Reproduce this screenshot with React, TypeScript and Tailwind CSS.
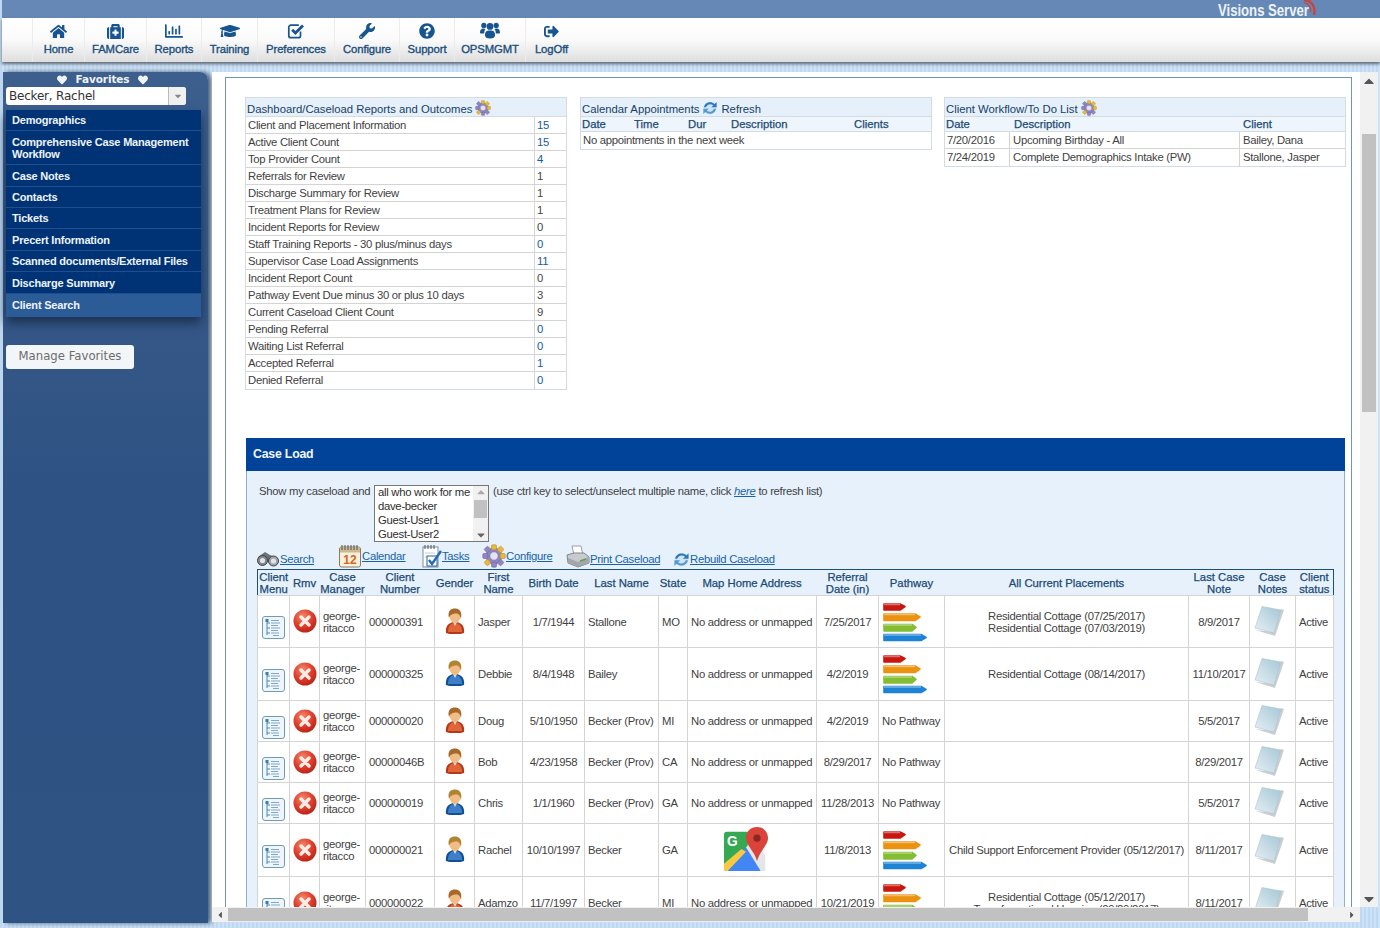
import React from "react";
import { FaHome, FaMedkit, FaRegChartBar, FaGraduationCap, FaWrench, FaQuestionCircle, FaSignOutAlt, FaHeart, FaCaretDown, FaCaretUp, FaCaretRight, FaCaretLeft } from "react-icons/fa";

const CheckSquare = ({ size = 17 }: { size?: number }) => (
  <svg width={size} height={size} viewBox="0 0 18 18" className="block">
    <path d="M13.5 9.5v4.2a2 2 0 0 1-2 2H3.8a2 2 0 0 1-2-2V5.2a2 2 0 0 1 2-2h8" fill="none" stroke="currentColor" strokeWidth="1.7" />
    <path d="M5.2 7.8 L8.4 11 L16 3.4" fill="none" stroke="currentColor" strokeWidth="2.8" />
  </svg>
);

const PeopleIco = ({ size = 20 }: { size?: number }) => (
  <svg width={size} height={size} viewBox="0 0 20 18" fill="currentColor" className="block">
    <circle cx="3.8" cy="3.4" r="2.6" />
    <circle cx="16.2" cy="3.4" r="2.6" />
    <circle cx="10" cy="4.4" r="3.4" />
    <path d="M0 11 C0 7.5 1.5 6.4 3.8 6.4 C4.6 6.4 5 6.6 5.4 6.9 C4.6 8.2 4.2 9.6 4.2 11.6 L0.8 11.6 Z" />
    <path d="M20 11 C20 7.5 18.5 6.4 16.2 6.4 C15.4 6.4 15 6.6 14.6 6.9 C15.4 8.2 15.8 9.6 15.8 11.6 L19.2 11.6 Z" />
    <path d="M5 13.2 C5 9.8 6.4 8.4 10 8.4 C13.6 8.4 15 9.8 15 13.2 C15 15.2 13.4 16.5 10 16.5 C6.6 16.5 5 15.2 5 13.2 Z" />
  </svg>
);

const Gear = ({ s = 16 }: { s?: number }) => (
  <svg width={s} height={s} viewBox="0 0 24 24" className="inline-block shrink-0">
    <g fill="#8f86c4" stroke="#6d67a3" strokeWidth="0.6">
      <circle cx="12" cy="12" r="8" />
      <rect x="9.5" y="0.8" width="5" height="5" rx="1.2" fill="#e8b93a" stroke="#b98c20" />
      <rect x="9.5" y="18.2" width="5" height="5" rx="1.2" />
      <rect x="0.8" y="9.5" width="5" height="5" rx="1.2" />
      <rect x="18.2" y="9.5" width="5" height="5" rx="1.2" fill="#e8b93a" stroke="#b98c20" />
      <rect x="3" y="3" width="5" height="5" rx="1.2" transform="rotate(45 5.5 5.5)" />
      <rect x="16" y="3" width="5" height="5" rx="1.2" transform="rotate(45 18.5 5.5)" fill="#e8b93a" stroke="#b98c20" />
      <rect x="3" y="16" width="5" height="5" rx="1.2" transform="rotate(45 5.5 18.5)" fill="#e8b93a" stroke="#b98c20" />
      <rect x="16" y="16" width="5" height="5" rx="1.2" transform="rotate(45 18.5 18.5)" />
    </g>
    <circle cx="12" cy="12" r="4.2" fill="#e4e2f3" stroke="#77719f" strokeWidth="0.7" />
  </svg>
);

const RefreshIco = ({ s = 16 }: { s?: number }) => (
  <svg width={s} height={s} viewBox="0 0 24 24" className="inline-block shrink-0">
    <ellipse cx="12" cy="12" rx="10" ry="9.5" fill="#cfe3f3" />
    <path d="M3 11 C4 4 13 1 19 6 L22 3 L22 11 L14 11 L17 8 C13 5 8 6 6 11 Z" fill="#2e78b7" />
    <path d="M21 13 C20 20 11 23 5 18 L2 21 L2 13 L10 13 L7 16 C11 19 16 18 18 13 Z" fill="#4f9ad0" />
  </svg>
);

const Binoculars = () => (
  <svg width="24" height="18" viewBox="0 0 24 18" className="shrink-0">
    <path d="M2 7 L9 2 L14 5 L22 8 L20 14 L12 11 L8 15 L3 13 Z" fill="#6d7278" />
    <circle cx="6.5" cy="10.5" r="5" fill="#83888e" stroke="#3f4347" />
    <circle cx="17.5" cy="11" r="5" fill="#9fa4a9" stroke="#3f4347" />
    <circle cx="6.5" cy="10.5" r="2.6" fill="#dfe4e8" />
    <circle cx="17.5" cy="11" r="2.6" fill="#dfe4e8" />
  </svg>
);

const CalendarIco = () => (
  <svg width="24" height="24" viewBox="0 0 24 24" className="shrink-0">
    <rect x="1.5" y="3" width="21" height="20" rx="2" fill="#f6f0df" stroke="#8d7b58" />
    <rect x="2" y="3.5" width="20" height="5" fill="#cdb98f" />
    <path d="M4 1v5M7 1v5M10 1v5M13 1v5M16 1v5M19 1v5" stroke="#555" strokeWidth="1" />
    <text x="12" y="20" textAnchor="middle" fontSize="12" fontWeight="700" fontFamily="Liberation Sans" fill="#d8651c">12</text>
  </svg>
);

const TasksIco = () => (
  <svg width="20" height="24" viewBox="0 0 20 24" className="shrink-0">
    <rect x="1" y="3" width="15" height="20" fill="#fff" stroke="#7f8ea0" />
    <path d="M3 1v4M6 1v4M9 1v4M12 1v4" stroke="#555" />
    <path d="M3 9h10M3 13h6" stroke="#c8d0da" />
    <rect x="5" y="12" width="10" height="10" fill="#fff" stroke="#2a5f9e" />
    <path d="M7 16 L10 20 L19 7" fill="none" stroke="#1e6bb8" strokeWidth="2.4" />
  </svg>
);

const PrinterIco = () => (
  <svg width="24" height="24" viewBox="0 0 24 24" className="shrink-0">
    <path d="M6 2 L15 2 L17 11 L8 11 Z" fill="#fff" stroke="#9aa0a6" />
    <path d="M1 11 L8 9 L18 9 L23 13 L23 19 L12 23 L2 19 Z" fill="#c7cbcf" stroke="#80858a" />
    <path d="M2 14 L12 18 L23 13 L23 19 L12 23 L2 19 Z" fill="#a2a7ac" />
    <path d="M14 17 L20 15" stroke="#5aa04f" strokeWidth="1.5" />
  </svg>
);

const ClientMenuIco = () => (
  <svg width="23" height="23" viewBox="0 0 23 23" className="block mx-auto mt-[12px]">
    <rect x="0.5" y="0.5" width="22" height="22" rx="2.5" fill="#eef6fb" stroke="#6f9ab8" />
    <path d="M5 4v15M5 7h3M5 12h3M5 17h3" stroke="#4d87b3" fill="none" />
    <rect x="3.5" y="3" width="3" height="3" fill="#3e7dab" />
    <path d="M9 4.5h8M9 7h9M9 9.5h7M9 12h9M9 14.5h7M9 17h8M11 19.5h6" stroke="#7fa9c6" strokeWidth="1" />
  </svg>
);

const RemoveIco = () => (
  <svg width="24" height="24" viewBox="0 0 24 24" className="block mx-auto mb-[1px]">
    <defs>
      <radialGradient id="rmg" cx="40%" cy="30%" r="75%">
        <stop offset="0%" stopColor="#f08a6e" />
        <stop offset="55%" stopColor="#df3f2c" />
        <stop offset="100%" stopColor="#b81f14" />
      </radialGradient>
    </defs>
    <circle cx="12" cy="12" r="11.5" fill="url(#rmg)" />
    <path d="M8 8 L16 16 M16 8 L8 16" stroke="#fbeee8" strokeWidth="3.4" strokeLinecap="round" />
  </svg>
);

const Person = ({ f }: { f: boolean }) => {
  const c1 = f ? "#3d7fc9" : "#e0663a";
  const c2 = f ? "#12508f" : "#b23a1a";
  return (
    <svg width="22" height="26" viewBox="0 0 22 26" className="block mx-auto mb-[2px]">
      <path d="M2 25 C1 17 6 14 11 14 C16 14 21 17 20 25 C15 27 7 27 2 25 Z" fill={c2} />
      <path d="M4 24 C4 18 7 15 11 15 C15 15 18 18 18 24 Z" fill={c1} />
      <path d="M9 14 L11 18 L13 14 Z" fill="#f3dcc0" />
      <ellipse cx="11" cy="8" rx="5.4" ry="7" fill="#f0bd86" />
      <path d="M5 10 C3 2 8 0 12 0.5 C17 1 18 6 17 11 C16 6 14 5 11 5.5 C8 6 6 7 5 10 Z" fill={f ? "#b08432" : "#a8682a"} />
    </svg>
  );
};

const Pathway = () => (
  <svg width="44" height="40" viewBox="0 0 44 40" className="block ml-[1px]">
    <g strokeLinejoin="round" strokeWidth="1.6">
      <path d="M1 2 L17 2 L22 4.5 L17 8 L1 8 Z" fill="#c8170f" stroke="#c8170f" />
      <path d="M1 12 L32 12 L37 15 L32 18.5 L1 18.5 Z" fill="#ec9211" stroke="#ec9211" />
      <path d="M1 22.5 L29 22.5 L33 25.5 L29 29 L1 29 Z" fill="#84bd33" stroke="#84bd33" />
      <path d="M1 32.5 L38 32.5 L43 35.5 L38 38.5 L1 38.5 Z" fill="#1e83d4" stroke="#1e83d4" />
    </g>
    <path d="M1 2.5h16M1 12.5h31M1 23h28M1 33h37" stroke="#ffffff" strokeOpacity="0.4" strokeWidth="1.5" />
  </svg>
);

const Notebook = () => (
  <svg width="30" height="30" viewBox="0 0 30 30" className="block ml-[1px] mb-[2px]">
    <defs>
      <linearGradient id="nbg" x1="0" y1="1" x2="1" y2="0">
        <stop offset="0%" stopColor="#e6f0f4" />
        <stop offset="100%" stopColor="#a4c6d6" />
      </linearGradient>
    </defs>
    <path d="M1 24 L21 30 L30 4 L27 3 L20 26 Z" fill="#c8ced1" />
    <path d="M1 22 L8 0.5 L27 4 L20 27 Z" fill="url(#nbg)" stroke="#a9bcc6" strokeWidth="0.5" />
  </svg>
);

const MapsLogo = () => (
  <svg width="44" height="48" viewBox="0 0 48 50" className="block ml-[33px]">
    <path d="M0 8 Q0 5 3 5 L26 5 L26 22 L0 46 Z" fill="#34a853" />
    <path d="M0 46 L24 22 L45 47 Q45 48 42 48 L3 48 Q0 48 0 46 Z" fill="#4285f4" />
    <path d="M0 40 L19 24 L24 27 L4 48 L3 48 Q0 48 0 46 Z" fill="#f8c93e" />
    <path d="M24 22 L32 14 L45 30 L45 48 L40 48 Z" fill="#e4e6e8" />
    <text x="9" y="21" fontSize="15" fontWeight="700" fontFamily="Liberation Sans" fill="#fff" textAnchor="middle">G</text>
    <path d="M36 0 C29 0 24 5 24 12 C24 20 33 26 36 37 C39 26 48 20 48 12 C48 5 43 0 36 0 Z" fill="#d9433a" />
    <circle cx="36" cy="12" r="4" fill="#8a2720" />
  </svg>
);

const nav = [
  { l: "Home", w: "w-[52px]", I: FaHome, s: 17 },
  { l: "FAMCare", w: "w-[62px]", I: FaMedkit, s: 17 },
  { l: "Reports", w: "w-[55px]", I: FaRegChartBar, s: 18 },
  { l: "Training", w: "w-[56px]", I: FaGraduationCap, s: 20 },
  { l: "Preferences", w: "w-[77px]", I: CheckSquare, s: 18 },
  { l: "Configure", w: "w-[65px]", I: FaWrench, s: 16 },
  { l: "Support", w: "w-[55px]", I: FaQuestionCircle, s: 16 },
  { l: "OPSMGMT", w: "w-[71px]", I: PeopleIco, s: 20 },
  { l: "LogOff", w: "w-[52px]", I: FaSignOutAlt, s: 15 },
];

const menu = [
  { l: "Demographics", c: "h-[21px]" },
  { l: "Comprehensive Case Management Workflow", c: "h-[34px]" },
  { l: "Case Notes", c: "h-[22px]" },
  { l: "Contacts", c: "h-[21px]" },
  { l: "Tickets", c: "h-[21px]" },
  { l: "Precert Information", c: "h-[22px]" },
  { l: "Scanned documents/External Files", c: "h-[21px]" },
  { l: "Discharge Summary", c: "h-[22px]" },
];

const dash: [string, string, boolean][] = [
  ["Client and Placement Information", "15", true],
  ["Active Client Count", "15", true],
  ["Top Provider Count", "4", true],
  ["Referrals for Review", "1", false],
  ["Discharge Summary for Review", "1", false],
  ["Treatment Plans for Review", "1", false],
  ["Incident Reports for Review", "0", false],
  ["Staff Training Reports - 30 plus/minus days", "0", true],
  ["Supervisor Case Load Assignments", "11", true],
  ["Incident Report Count", "0", false],
  ["Pathway Event Due minus 30 or plus 10 days", "3", false],
  ["Current Caseload Client Count", "9", false],
  ["Pending Referral", "0", true],
  ["Waiting List Referral", "0", true],
  ["Accepted Referral", "1", true],
  ["Denied Referral", "0", true],
];

type Row = {
  h: string; num: string; f: boolean; first: string; birth: string; last: string; st: string;
  map?: boolean; ref: string; path: boolean; place: string[]; note: string;
};
const rows: Row[] = [
  { h: "h-[52px]", num: "000000391", f: false, first: "Jasper", birth: "1/7/1944", last: "Stallone", st: "MO", ref: "7/25/2017", path: true, place: ["Residential Cottage (07/25/2017)", "Residential Cottage (07/03/2019)"], note: "8/9/2017" },
  { h: "h-[53px]", num: "000000325", f: true, first: "Debbie", birth: "8/4/1948", last: "Bailey", st: "", ref: "4/2/2019", path: true, place: ["Residential Cottage (08/14/2017)"], note: "11/10/2017" },
  { h: "h-[41px]", num: "000000020", f: false, first: "Doug", birth: "5/10/1950", last: "Becker (Prov)", st: "MI", ref: "4/2/2019", path: false, place: [], note: "5/5/2017" },
  { h: "h-[41px]", num: "00000046B", f: false, first: "Bob", birth: "4/23/1958", last: "Becker (Prov)", st: "CA", ref: "8/29/2017", path: false, place: [], note: "8/29/2017" },
  { h: "h-[41px]", num: "000000019", f: true, first: "Chris", birth: "1/1/1960", last: "Becker (Prov)", st: "GA", ref: "11/28/2013", path: false, place: [], note: "5/5/2017" },
  { h: "h-[53px]", num: "000000021", f: true, first: "Rachel", birth: "10/10/1997", last: "Becker", st: "GA", map: true, ref: "11/8/2013", path: true, place: ["Child Support Enforcement Provider (05/12/2017)"], note: "8/11/2017" },
  { h: "h-[53px]", num: "000000022", f: false, first: "Adamzo", birth: "11/7/1997", last: "Becker", st: "MI", ref: "10/21/2019", path: true, place: ["Residential Cottage (05/12/2017)", "Transformational Housing (09/20/2017)"], note: "8/11/2017" },
];

const td = "border border-[#d4d4d4] px-[3px] text-[11.3px] tracking-[-0.28px] leading-[12px] text-[#3f3f3f] align-middle";
const th = "px-0 text-[11.3px] leading-[12px] font-normal text-[#1b4a74] [-webkit-text-stroke:0.25px_#1b4a74] text-center align-middle";
const panelHead = "h-[19px] flex items-end gap-[3px] px-[1px] text-[11.3px] leading-[14px] text-[#173f66] bg-[#e5f0fa] border-b border-[#d4dce3]";
const colHead = "text-[11.3px] text-[#1b4a74] [-webkit-text-stroke:0.25px_#1b4a74] font-normal text-left";
const link = "text-[11.3px] tracking-[-0.28px] text-[#1763a6] underline";

export default function App() {
  return (
    <div className="w-[1380px] h-[928px] overflow-hidden bg-[repeating-linear-gradient(90deg,#c0d9f3_0_2px,#cee2f7_2px_4px)] flex flex-col pl-[2px] font-['Liberation_Sans',Arial,sans-serif]">
      <div className="h-[18px] shrink-0 bg-[#6688b6] flex justify-end pr-[72px]">
        <div className="relative w-[90px] h-[18px]">
          <span className="block origin-left scale-x-[0.82] text-[16px] leading-[21px] font-bold text-[#eef3f8] whitespace-nowrap">Visions Server</span>
          <svg width="16" height="16" viewBox="0 0 16 16" className="absolute right-[-10px] top-0">
            <path d="M2 0 C9 0 14 6 12 15" fill="none" stroke="#c8443c" strokeWidth="2.4" />
            <path d="M2 2.5 C6 3 9.5 7 8.5 12" fill="none" stroke="#c8443c" strokeWidth="1.2" />
          </svg>
        </div>
      </div>
      <div className="h-[44px] shrink-0 flex pl-[30px] bg-gradient-to-b from-[#ffffff] via-[#fafafa] to-[#dedede] shadow-[0_2px_3px_#5c6670] z-10">
        {nav.map(({ l, w, I, s }) => (
          <div key={l} className={`${w} h-full flex flex-col items-center border-l border-[#ececec]`}>
            <div className="h-[25px] flex items-center pt-[1px] text-[#16558f]"><I size={s} /></div>
            <span className="text-[11.3px] tracking-[-0.1px] leading-[12px] text-[#1b4f7d] [-webkit-text-stroke:0.35px_#1b4f7d] whitespace-nowrap">{l}</span>
          </div>
        ))}
      </div>
      <div className="flex-1 flex pt-[10px] min-h-0">
        <aside className="w-[205px] ml-[1px] h-[851px] shrink-0 rounded-tr-[8px] bg-gradient-to-b from-[#3d5f8e] via-[#2e5283] to-[#2f5484] shadow-[3px_0_5px_#4a5c74] px-[3px] font-['DejaVu_Sans',sans-serif]">
          <div className="h-[14px] flex items-center justify-center gap-[9px] pr-[6px] text-[10.5px] tracking-[-0.1px] font-bold text-[#f0f3f7] mt-[1px]">
            <FaHeart size={10} />
            <span>Favorites</span>
            <FaHeart size={10} />
          </div>
          <div className="w-[180px] h-[18px] bg-white rounded-[3px] flex items-center">
            <span className="flex-1 pl-[3px] text-[12px] tracking-[-0.2px] leading-[16px] text-[#333]">Becker, Rachel</span>
            <span className="w-[18px] h-[18px] flex items-center justify-center border-l border-[#bbb] bg-[#f0f0f0] rounded-r-[3px] text-[#888]"><FaCaretDown size={10} /></span>
          </div>
          <div className="w-[195px] mt-[5px] bg-[#003375] shadow-[0_6px_10px_#1b3150] font-['Liberation_Sans',sans-serif]">
            {menu.map((m) => (
              <div key={m.l} className={`${m.c} flex items-center pl-[6px] pr-[3px] border-b border-[#1d4f8c] text-[11px] tracking-[-0.2px] leading-[12px] font-bold text-[#eef3fa]`}>{m.l}</div>
            ))}
            <div className="h-[23px] flex items-center pl-[6px] bg-[#2b5c98] text-[11px] tracking-[-0.2px] font-bold text-[#eef3fa]">Client Search</div>
          </div>
          <div className="w-[128px] h-[24px] mt-[28px] rounded-[3px] bg-[#f3f6f9] flex items-center justify-center text-[11.7px] text-[#6c6c6c]">Manage Favorites</div>
        </aside>
        <div className="w-[1167px] ml-[4px] flex flex-col shrink-0">
          <div className="flex h-[835px] shrink-0">
            <main className="w-[1148px] h-full overflow-hidden bg-white pl-[13px] pt-[5px] shrink-0">
              <div className="w-[1127px] h-[1000px] border border-[#6e98ad] pl-[19px] pt-[19px]">
                <div className="flex items-start h-[341px]">
                  <section className="w-[322px] border border-[#d4dce3] bg-white">
                    <div className={panelHead}>
                      <span>Dashboard/Caseload Reports and Outcomes</span>
                      <Gear />
                    </div>
                    {dash.map(([a, b, blue]) => (
                      <div key={a} className="h-[17px] flex items-center border-b border-[#d4d4d4] last:border-b-0 text-[11.3px] tracking-[-0.28px] text-[#3f3f3f]">
                        <span className="w-[289px] h-full flex items-center pl-[2px] border-r border-[#d4d4d4] whitespace-nowrap">{a}</span>
                        <span className={`pl-[2px] ${blue ? "text-[#155a9c]" : "text-[#444]"}`}>{b}</span>
                      </div>
                    ))}
                  </section>
                  <section className="w-[352px] ml-[13px] border border-[#d4dce3] bg-white">
                    <div className={panelHead}>
                      <span>Calendar Appointments</span>
                      <RefreshIco />
                      <span>Refresh</span>
                    </div>
                    <div className={`flex h-[15px] items-center bg-[#eef5fc] border-b border-[#d4dce3] pl-[1px] ${colHead}`}>
                      <span className="w-[52px]">Date</span>
                      <span className="w-[54px]">Time</span>
                      <span className="w-[43px]">Dur</span>
                      <span className="w-[123px]">Description</span>
                      <span>Clients</span>
                    </div>
                    <div className="h-[17px] flex items-center pl-[2px] text-[11.3px] tracking-[-0.28px] text-[#3f3f3f]">No appointments in the next week</div>
                  </section>
                  <section className="w-[402px] ml-[12px] border border-[#d4dce3] bg-white">
                    <div className={panelHead}>
                      <span>Client Workflow/To Do List</span>
                      <Gear />
                    </div>
                    <div className={`flex h-[15px] items-center bg-[#eef5fc] border-b border-[#d4dce3] pl-[1px] ${colHead}`}>
                      <span className="w-[68px]">Date</span>
                      <span className="w-[229px]">Description</span>
                      <span>Client</span>
                    </div>
                    {[
                      ["7/20/2016", "Upcoming Birthday - All", "Bailey, Dana"],
                      ["7/24/2019", "Complete Demographics Intake (PW)", "Stallone, Jasper"],
                    ].map(([a, b, c]) => (
                      <div key={a} className="h-[17px] flex items-center border-b border-[#d4d4d4] text-[11.3px] tracking-[-0.28px] text-[#3f3f3f] last:border-b-0">
                        <span className="w-[65px] h-full flex items-center pl-[2px] border-r border-[#d4d4d4]">{a}</span>
                        <span className="w-[230px] h-full flex items-center pl-[3px] border-r border-[#d4d4d4]">{b}</span>
                        <span className="pl-[3px]">{c}</span>
                      </div>
                    ))}
                  </section>
                </div>
                <section className="w-[1099px] ml-[1px]">
                  <div className="h-[33px] flex items-center pl-[7px] pb-[1px] bg-[#004399] text-[12.3px] tracking-[-0.2px] font-bold text-[#f2f6fb]">Case Load</div>
                  <div className="h-[600px] bg-[#e6f1fc] border-x border-[#8db0cc] pt-[14px] px-[10px]">
                    <div className="flex items-start text-[11.3px] tracking-[-0.28px] text-[#3f3f3f] pl-[2px]">
                      <span className="w-[115px] leading-[12px] whitespace-nowrap">Show my caseload and</span>
                      <div className="w-[115px] h-[57px] bg-white border border-[#777] flex overflow-hidden">
                        <div className="flex-1 pl-[3px] -mt-[1px] text-[11.3px] leading-[14px] text-[#2e2e2e] whitespace-nowrap">
                          <div>all who work for me</div>
                          <div>dave-becker</div>
                          <div>Guest-User1</div>
                          <div>Guest-User2</div>
                        </div>
                        <div className="w-[15px] h-full bg-[#f1f1f1] flex flex-col items-center text-[#666]">
                          <FaCaretUp size={10} className="h-[12px] text-[#aaa]" />
                          <div className="w-[13px] h-[18px] my-[2px] bg-[#c1c1c1]" />
                          <div className="flex-1" />
                          <FaCaretDown size={10} className="h-[12px]" />
                        </div>
                      </div>
                      <span className="ml-[4px] leading-[12px] whitespace-nowrap">(use ctrl key to select/unselect multiple name, click <a className="italic text-[#1763a6] underline">here</a> to refresh list)</span>
                    </div>
                    <div className="flex items-end h-[25px] mt-[1px] mb-[1px] -ml-[1px]">
                      <div className="w-[82px] flex items-center"><Binoculars /><a className={link}>Search</a></div>
                      <div className="w-[84px] flex items-center"><CalendarIco /><a className={link}>Calendar</a></div>
                      <div className="w-[60px] flex items-center"><TasksIco /><a className={link}>Tasks</a></div>
                      <div className="w-[84px] flex items-center"><Gear s={24} /><a className={link}>Configure</a></div>
                      <div className="w-[107px] flex items-end"><PrinterIco /><a className={link}>Print Caseload</a></div>
                      <div className="flex items-end"><RefreshIco s={17} /><a className={link}>Rebuild Caseload</a></div>
                    </div>
                    <table className="w-[1076px] table-fixed border-collapse bg-white">
                      <colgroup>
                        <col className="w-[32px]" /><col className="w-[30px]" /><col className="w-[46px]" /><col className="w-[69px]" />
                        <col className="w-[40px]" /><col className="w-[48px]" /><col className="w-[62px]" /><col className="w-[74px]" />
                        <col className="w-[29px]" /><col className="w-[129px]" /><col className="w-[62px]" /><col className="w-[66px]" />
                        <col className="w-[244px]" /><col className="w-[61px]" /><col className="w-[46px]" /><col className="w-[38px]" />
                      </colgroup>
                      <thead>
                        <tr className="h-[26px] bg-[#e6f1fc] border-t border-x border-[#1d5079]">
                          <th className={th}>Client Menu</th>
                          <th className={th}>Rmv</th>
                          <th className={th}>Case Manager</th>
                          <th className={th}>Client Number</th>
                          <th className={th}>Gender</th>
                          <th className={th}>First Name</th>
                          <th className={th}>Birth Date</th>
                          <th className={th}>Last Name</th>
                          <th className={th}>State</th>
                          <th className={th}>Map Home Address</th>
                          <th className={th}>Referral Date (in)</th>
                          <th className={th}>Pathway</th>
                          <th className={th}>All Current Placements</th>
                          <th className={th}>Last Case Note</th>
                          <th className={th}>Case Notes</th>
                          <th className={th}>Client status</th>
                        </tr>
                      </thead>
                      <tbody>
                        {rows.map((r) => (
                          <tr key={r.num} className={r.h}>
                            <td className={td}><ClientMenuIco /></td>
                            <td className={td}><RemoveIco /></td>
                            <td className={td}>george-<br />ritacco</td>
                            <td className={td}>{r.num}</td>
                            <td className={td}><Person f={r.f} /></td>
                            <td className={td}>{r.first}</td>
                            <td className={`${td} text-center whitespace-nowrap`}>{r.birth}</td>
                            <td className={`${td} whitespace-nowrap`}>{r.last}</td>
                            <td className={td}>{r.st}</td>
                            <td className={`${td} whitespace-nowrap`}>{r.map ? <MapsLogo /> : "No address or unmapped"}</td>
                            <td className={`${td} text-center whitespace-nowrap`}>{r.ref}</td>
                            <td className={td}>{r.path ? <Pathway /> : <span className="whitespace-nowrap">No Pathway</span>}</td>
                            <td className={`${td} text-center whitespace-nowrap`}>{r.place.map((p) => <div key={p}>{p}</div>)}</td>
                            <td className={`${td} text-center whitespace-nowrap`}>{r.note}</td>
                            <td className={td}><Notebook /></td>
                            <td className={td}>Active</td>
                          </tr>
                        ))}
                      </tbody>
                    </table>
                  </div>
                </section>
              </div>
            </main>
            <div className="w-[18px] h-full bg-[#f1f1f1] flex flex-col items-center text-[#555]">
              <FaCaretUp size={10} className="h-[16px] mt-[1px]" />
              <div className="w-[14px] h-[278px] mt-[45px] bg-[#c1c1c1]" />
              <div className="flex-1" />
              <FaCaretDown size={10} className="h-[16px]" />
            </div>
          </div>
          <div className="w-[1148px] h-[15px] bg-[#f1f1f1] flex items-center text-[#555]">
            <FaCaretLeft size={10} className="w-[16px]" />
            <div className="w-[1080px] h-[13px] bg-[#c1c1c1]" />
            <div className="flex-1" />
            <FaCaretRight size={10} className="w-[16px]" />
          </div>
        </div>
      </div>
    </div>
  );
}
